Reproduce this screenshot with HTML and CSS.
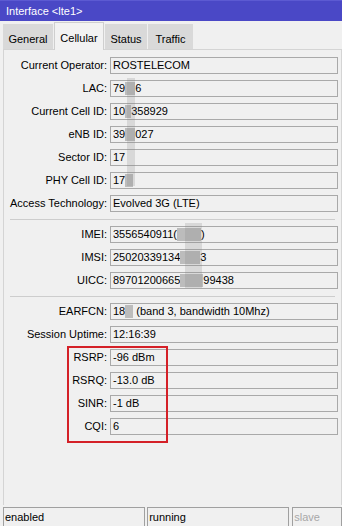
FILE: index.html
```html
<!DOCTYPE html>
<html lang="en">
<head>
    <meta charset="UTF-8">
    <meta name="viewport" content="width=device-width, initial-scale=1.0">
    <title>Interface &lt;lte1&gt;</title>
    <link rel="stylesheet" href="styles.css">
</head>
<body>
    <div class="window">
        <div class="titlebar">Interface &lt;lte1&gt;</div>

        <div class="tabs">
            <div class="tab tab-general">General</div>
            <div class="tab tab-cellular active">Cellular</div>
            <div class="tab tab-status">Status</div>
            <div class="tab tab-traffic">Traffic</div>
        </div>

        <div class="panel">
            <div class="form">
                <div class="label">Current Operator:</div>
                <div class="field">ROSTELECOM</div>

                <div class="label">LAC:</div>
                <div class="field">79<span class="smudge w10"></span>6</div>

                <div class="label">Current Cell ID:</div>
                <div class="field">10<span class="smudge w6"></span>358929</div>

                <div class="label">eNB ID:</div>
                <div class="field">39<span class="smudge w10"></span>027</div>

                <div class="label">Sector ID:</div>
                <div class="field">17</div>

                <div class="label">PHY Cell ID:</div>
                <div class="field">17<span class="smudge w8"></span></div>

                <div class="label">Access Technology:</div>
                <div class="field">Evolved 3G (LTE)</div>

                <div class="sep"></div>

                <div class="label">IMEI:</div>
                <div class="field">3556540911(<span class="smudge w24"></span>)</div>

                <div class="label">IMSI:</div>
                <div class="field">25020339134<span class="smudge w20"></span>3</div>

                <div class="label">UICC:</div>
                <div class="field">89701200665<span class="smudge w23"></span>99438</div>

                <div class="sep"></div>

                <div class="label">EARFCN:</div>
                <div class="field">18<span class="smudge w8"></span> (band 3, bandwidth 10Mhz)</div>

                <div class="label">Session Uptime:</div>
                <div class="field">12:16:39</div>

                <div class="label">RSRP:</div>
                <div class="field">-96 dBm</div>

                <div class="label">RSRQ:</div>
                <div class="field">-13.0 dB</div>

                <div class="label">SINR:</div>
                <div class="field">-1 dB</div>

                <div class="label">CQI:</div>
                <div class="field">6</div>
            </div>

            <!-- blurred bits of the screenshot -->
            <div class="strip strip-a"></div>
            <div class="strip strip-b"></div>

            <!-- red marker round the signal values -->
            <div class="highlight"></div>
        </div>

        <div class="statusbar">
            <div class="status status-enabled">enabled</div>
            <div class="status status-running">running</div>
            <div class="status status-slave">slave</div>
        </div>
    </div>
</body>
</html>
```

FILE: styles.css
```css
body {
    margin: 0;
    background-color: #f0f0f0;
    color: #000000;
    font-family: "Liberation Sans", Arial, sans-serif;
    font-size: 11px;
    overflow: hidden;
}

.window {
    height: 526px;
    display: flex;
    flex-direction: column;
}

.titlebar {
    flex: none;
    height: 21px;
    line-height: 20px;
    padding-left: 6px;
    background-color: #4a48c6;
    border-top: 1px solid #5c5ad2;
    box-sizing: border-box;
    color: #ffffff;
}

/* tabs */
.tabs {
    flex: none;
    height: 28px;
    padding: 1px 0 0 3px;
    box-sizing: border-box;
    display: flex;
    align-items: flex-start;
}

.tab {
    height: 25px;
    margin-top: 2px;
    margin-right: 1px;
    padding-top: 5px;
    line-height: 20px;
    box-sizing: border-box;
    text-align: center;
    background-color: #d9d9d9;
}

.tab.active {
    position: relative;
    z-index: 1;
    height: 28px;
    margin-top: 0;
    padding-top: 5px;
    background-color: #f2f2f2;
    border: 1px solid #cfcfcf;
    border-bottom: none;
}

.tab-general { width: 50px; }
.tab-cellular { width: 50px; }
.tab-status { width: 42px; }
.tab-traffic { width: 45px; }

/* main panel */
.panel {
    flex: 1;
    min-height: 0;
    position: relative;
    margin: 0 0 2px 3px;
    border: 1px solid #d4d4d4;
    border-bottom: none;
}

.form {
    display: grid;
    grid-template-columns: 103px 1fr;
    column-gap: 3px;
    row-gap: 6px;
    padding: 7px 3px 0 0;
}

.label {
    height: 17px;
    line-height: 17px;
    text-align: right;
    white-space: nowrap;
}

.field {
    height: 17px;
    line-height: 15px;
    padding-left: 2px;
    box-sizing: border-box;
    border: 1px solid #a9a9a9;
    background-color: #f0f0f0;
    white-space: nowrap;
    overflow: hidden;
}

.sep {
    grid-column: 1 / -1;
    height: 2px;
    margin: 0 3px 0 6px;
    box-sizing: border-box;
    border-bottom: 1px solid #cdcdcd;
}

.smudge {
    display: inline-block;
    height: 13px;
    vertical-align: -3px;
    background-color: #bcbcbc;
}

.w6 { width: 6px; }
.w8 { width: 8px; }
.w10 { width: 10px; }
.w20 { width: 20px; }
.w23 { width: 23px; }
.w24 { width: 24px; }

.strip {
    position: absolute;
    background-color: rgba(130, 130, 130, 0.22);
}

.strip-a {
    left: 123px;
    top: 28px;
    width: 8px;
    height: 108px;
}

.strip-b {
    left: 181px;
    top: 173px;
    width: 17px;
    height: 65px;
}

.highlight {
    position: absolute;
    left: 63px;
    top: 296px;
    width: 101px;
    height: 97px;
    box-sizing: border-box;
    border: 2px solid #d42027;
}

/* status bar */
.statusbar {
    flex: none;
    height: 19px;
    display: flex;
}

.status {
    height: 20px;
    line-height: 18px;
    padding-left: 1px;
    box-sizing: border-box;
    border: 1px solid #a0a0a0;
    border-bottom: none;
}

.status-enabled {
    width: 143px;
    margin-left: 3px;
}

.status-running {
    width: 143px;
    margin-left: 2px;
}

.status-slave {
    width: 50px;
    margin-left: 3px;
    color: #a8a8a8;
}
```
